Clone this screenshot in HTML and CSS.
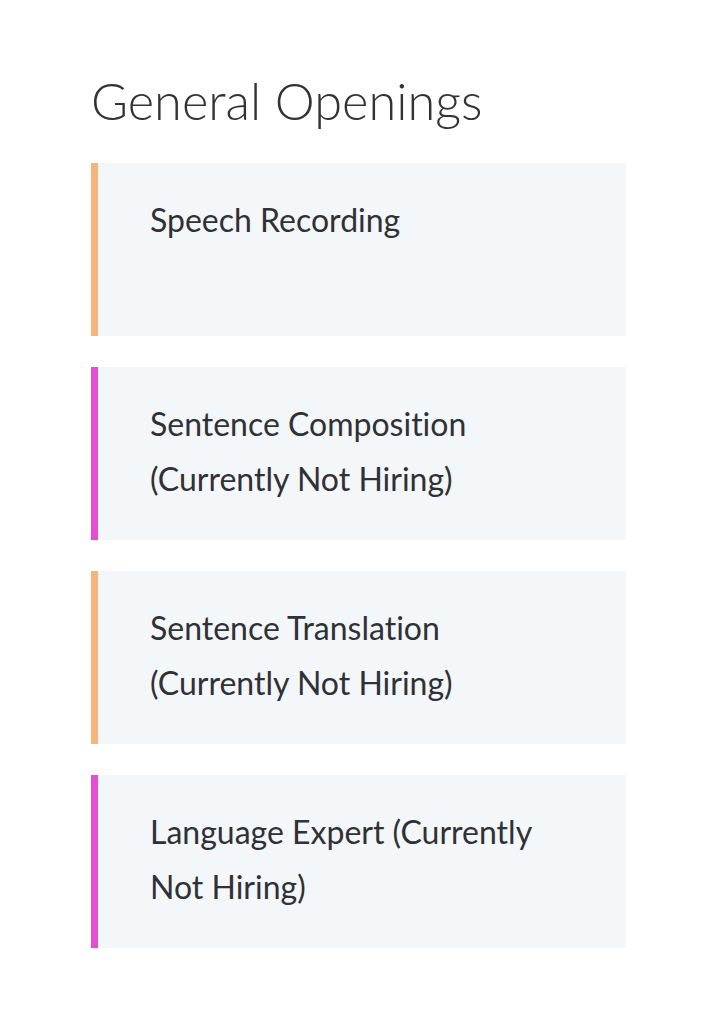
FILE: index.html
```html
<!DOCTYPE html>
<html>
<head>
  <title>General Openings</title>
  <link rel="stylesheet" href="styles.css">
</head>
<body>

  <div class="container">
    <h2>General Openings</h2>

    <div class="openings">
      <!-- orange / pink accents alternate -->
      <div class="opening orange">
        <p>Speech Recording</p>
      </div>

      <div class="opening pink">
        <p>Sentence Composition (Currently Not Hiring)</p>
      </div>

      <div class="opening orange">
        <p>Sentence Translation (Currently Not Hiring)</p>
      </div>

      <div class="opening pink">
        <p>Language Expert (Currently Not Hiring)</p>
      </div>
    </div>
  </div>

</body>
</html>
```

FILE: styles.css
```css
body {
  font-family: 'Lato', 'Noto Sans', sans-serif;
  font-variant-ligatures: none;
  margin: 0;
  padding: 0;
  background: #ffffff;
  color: #2f3136;
}

.container {
  padding: 71px 0 0 91px;
  width: 535px;
}

h2 {
  margin: 0 0 32px 0;
  font-size: 50.5px;
  font-weight: 300;
  line-height: 60px;
  color: #333333;
}

.openings {
  display: flex;
  flex-direction: column;
  gap: 31px;
}

.opening {
  box-sizing: border-box;
  min-height: 173px;
  padding: 29px 52px 34px 52px;
  background: #f4f7fa;
  border-left: 7px solid #f7b57c;
}

.opening.pink {
  border-left-color: #e24fd6;
}

.opening p {
  margin: 0;
  font-size: 32px;
  line-height: 55px;
}
```
